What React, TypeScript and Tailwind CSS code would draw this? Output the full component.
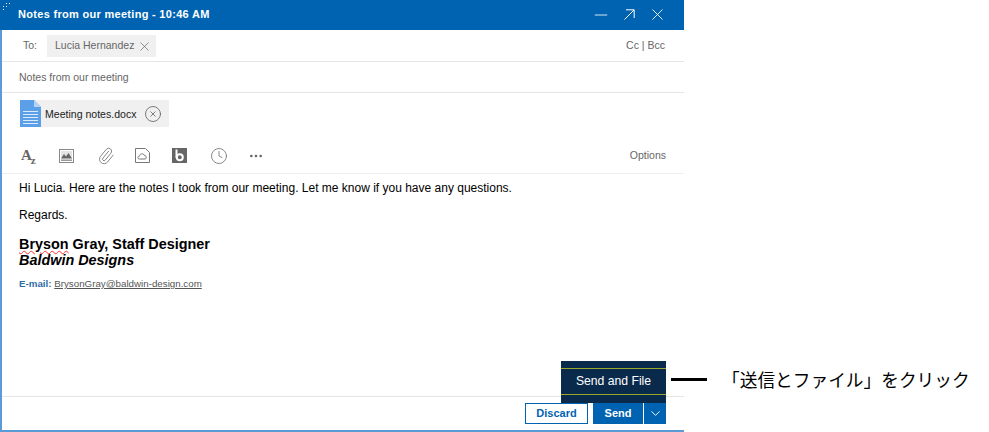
import { ChevronDown, Clock, MoreHorizontal, Minus, Paperclip, X, XCircle } from "lucide-react";

const font = "font-['Liberation_Sans',Arial,sans-serif]";

const FontIcon = () => (
  <div className="flex h-[18px] items-start font-['Liberation_Serif',serif] font-bold leading-none text-[#666]">
    <span className="text-[15px]">A</span>
    <span className="-ml-[1px] mt-[7px] text-[11px]">z</span>
  </div>
);

const ImageIcon = () => (
  <svg width="15" height="14" viewBox="0 0 15 14">
    <rect x="0.5" y="0.5" width="14" height="13" fill="#fff" stroke="#888" />
    <rect x="2" y="2" width="11" height="7.5" fill="#e4e4e4" />
    <path d="M2 9.5 L5 5 L7 7.5 L9.5 4 L13 9.5 Z" fill="#666" />
    <rect x="2" y="10.5" width="11" height="1.5" fill="#999" />
  </svg>
);

const CloudFileIcon = () => (
  <svg width="15" height="15" viewBox="0 0 15 15" fill="none" stroke="#777">
    <path d="M0.5 0.5 H10.5 L14.5 4.5 V14.5 H0.5 Z" />
    <path d="M4.5 11 C2.4 11 2.4 8.2 4.4 8.2 C4.6 5.4 8.6 5 9.2 7.4 C11.6 7 12 11 10 11 Z" />
  </svg>
);

const BoxIcon = () => (
  <svg width="15" height="15" viewBox="0 0 15 15">
    <rect width="15" height="15" fill="#666" />
    <path d="M4.5 1.5 V10" stroke="#fff" strokeWidth="2" />
    <circle cx="7.8" cy="9.3" r="3" fill="none" stroke="#fff" strokeWidth="2" />
  </svg>
);

const DocIcon = () => (
  <svg width="21" height="27" viewBox="0 0 21 27" className="shrink-0">
    <path d="M0 0 H14 L21 7 V27 H0 Z" fill="#5a9fe8" />
    <path d="M14 0 L21 7 H14 Z" fill="#b5d3f3" />
    <path d="M3 11.5 H18 M3 14.5 H18 M3 17.5 H18 M3 20.5 H18 M3 23.5 H18" stroke="#dcebfa" strokeWidth="1" />
  </svg>
);

const PopIcon = () => (
  <svg width="11" height="11" viewBox="0 0 11 11" fill="none" stroke="#fff" strokeWidth="1">
    <path d="M0.5 10.5 L10 1 M2 0.8 H10.2 V9" />
  </svg>
);

export default function App() {
  return (
    <div className={`relative h-[432px] w-[989px] overflow-hidden bg-white ${font}`}>
      <div className="flex h-[432px] w-[684px] flex-col border-b-2 border-l-2 border-[#5b9bd5]">
        {/* title bar */}
        <div className="relative -ml-[2px] flex h-[30px] shrink-0 items-center bg-[#0063b1] pb-[1px] pl-[18px] pr-[17px]">
          <span className="text-[11px] font-bold tracking-[0.3px] text-white">Notes from our meeting - 10:46 AM</span>
          <div className="absolute left-[3px] top-[3px] grid grid-cols-3 gap-[2px]">
            <i className="h-px w-px" />
            <i className="h-px w-px bg-white" />
            <i className="h-px w-px bg-white" />
            <i className="h-px w-px bg-white" />
            <i className="h-px w-px bg-white" />
            <i className="h-px w-px" />
            <i className="h-px w-px bg-white" />
          </div>
          <div className="ml-auto flex items-center gap-[13px]">
            <Minus size={20} color="#fff" strokeWidth={1} />
            <PopIcon />
            <X size={19} color="#fff" strokeWidth={1.1} />
          </div>
        </div>

        {/* to */}
        <div className="flex h-[32px] shrink-0 items-center border-b border-[#e6e6e6] pl-[21px] pr-[19px] pt-[1px] text-[10.5px] text-[#666]">
          <span className="w-[24px]">To:</span>
          <div className="flex h-[22px] items-center gap-[3px] bg-[#f0f0f0] pl-[8px] pr-[4px]">
            <span>Lucia Hernandez</span>
            <X size={15} strokeWidth={1} color="#555" />
          </div>
          <span className="ml-auto">Cc | Bcc</span>
        </div>

        {/* subject */}
        <div className="flex h-[31px] shrink-0 items-center border-b border-[#e6e6e6] pl-[17px] pt-[2px] text-[10.5px] text-[#666]">
          Notes from our meeting
        </div>

        {/* attachment */}
        <div className="flex h-[47px] shrink-0 pl-[18px] pt-[7px]">
          <div className="flex h-[27px] items-center bg-[#f0f0f0] pr-[7px]">
            <DocIcon />
            <span className="ml-[4px] pt-[2px] text-[10.55px] text-[#222]">Meeting notes.docx</span>
            <XCircle size={18} strokeWidth={1} color="#555" className="ml-[8px]" />
          </div>
        </div>

        {/* toolbar */}
        <div className="flex h-[34px] shrink-0 items-center border-b border-[#eeeeee] pl-[19px] pr-[18px] pb-[2px]">
          <div className="flex w-[38px] pt-[2px]"><FontIcon /></div>
          <div className="flex w-[38px]"><ImageIcon /></div>
          <div className="flex w-[38px]"><Paperclip size={18} strokeWidth={1} color="#666" className="rotate-[-5deg]" /></div>
          <div className="flex w-[37px]"><CloudFileIcon /></div>
          <div className="flex w-[38px]"><BoxIcon /></div>
          <div className="flex w-[38px]"><Clock size={18} strokeWidth={1} color="#666" /></div>
          <MoreHorizontal size={16} strokeWidth={2} color="#666" />
          <span className="ml-auto text-[10.5px] text-[#666]">Options</span>
        </div>

        {/* body */}
        <div className="min-h-0 flex-1 pl-[17px] pt-[6px] text-black">
          <p className="text-[12px] leading-[16px]">Hi Lucia. Here are the notes I took from our meeting. Let me know if you have any questions.</p>
          <p className="mt-[11px] text-[12px] leading-[16px]">Regards.</p>
          <p className="mt-[13px] text-[14.4px] font-bold leading-[16px]">
            <span className="underline decoration-wavy decoration-[#ff3030] decoration-1">Bryson</span> Gray, Staff Designer
          </p>
          <p className="text-[14.4px] font-bold italic leading-[17px]">Baldwin Designs</p>
          <p className="mt-[8px] text-[9.75px] leading-[14px] text-[#555]">
            <b className="text-[#2e6da4]">E-mail:</b> <span className="underline">BrysonGray@baldwin-design.com</span>
          </p>
        </div>

        {/* footer */}
        <div className="flex h-[34px] shrink-0 items-start justify-end gap-[5px] border-t border-[#e6e6e6] pr-[18px] pt-[6px] text-[11px] font-bold">
          <button className="flex h-[21px] w-[63px] items-center justify-center border border-[#0063b1] text-[#0063b1]">Discard</button>
          <div className="flex h-[21px] text-white">
            <button className="flex w-[50px] items-center justify-center bg-[#0063b1]">Send</button>
            <button className="ml-px flex w-[22px] items-center justify-center bg-[#0063b1]">
              <ChevronDown size={15} strokeWidth={1.5} />
            </button>
          </div>
        </div>
      </div>

      {/* send menu */}
      <div className="absolute left-[561px] top-[361px] h-[42px] w-[105px] bg-[#0a2a4c] pt-[7px]">
        <div className="flex h-[27px] items-center justify-center border-y border-[#9aa82a] text-[12.2px] text-white">Send and File</div>
      </div>

      {/* callout */}
      <div className="absolute left-[671px] top-[378px] h-[3px] w-[36px] bg-black" />
      <div className="absolute left-[722px] top-[368px] whitespace-nowrap font-['Noto_Sans_CJK_JP',sans-serif] text-[17.7px] leading-[22px] text-black">「送信とファイル」をクリック</div>
    </div>
  );
}
